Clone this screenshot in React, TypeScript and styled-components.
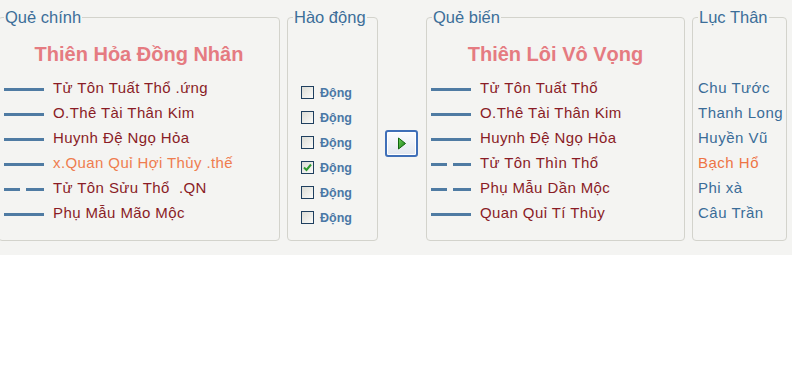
import React from 'react';
import styled, {createGlobalStyle} from 'styled-components';

const GlobalStyle = createGlobalStyle`
  html, body {
    margin: 0;
    padding: 0;
    background: #ffffff;
    font-family: Tahoma, "Liberation Sans", "DejaVu Sans", sans-serif;
  }
`

type Line = { kind: 'solid' | 'broken'; text: string; color?: 'orange' }

const chinh: Line[] = [
  {kind: 'solid', text: 'Tử Tôn Tuất Thổ .ứng'},
  {kind: 'solid', text: 'O.Thê Tài Thân Kim'},
  {kind: 'solid', text: 'Huynh Đệ Ngọ Hỏa'},
  {kind: 'solid', text: 'x.Quan Quỉ Hợi Thủy .thế', color: 'orange'},
  {kind: 'broken', text: 'Tử Tôn Sửu Thổ  .QN'},
  {kind: 'solid', text: 'Phụ Mẫu Mão Mộc'},
]

const bien: Line[] = [
  {kind: 'solid', text: 'Tử Tôn Tuất Thổ'},
  {kind: 'solid', text: 'O.Thê Tài Thân Kim'},
  {kind: 'solid', text: 'Huynh Đệ Ngọ Hỏa'},
  {kind: 'broken', text: 'Tử Tôn Thìn Thổ'},
  {kind: 'broken', text: 'Phụ Mẫu Dần Mộc'},
  {kind: 'solid', text: 'Quan Quỉ Tí Thủy'},
]

const hao = [false, false, false, true, false, false]
const lucThan = ['Chu Tước', 'Thanh Long', 'Huyền Vũ', 'Bạch Hổ', 'Phi xà', 'Câu Trần']

const Yao = ({kind}: { kind: Line['kind'] }) => (
  <YaoMark>
    {kind === 'solid' ? <Dash $w={40}/> : <><Dash $w={16}/><Dash $w={18}/></>}
  </YaoMark>
)

export default function App() {
  return (
    <>
      <GlobalStyle/>
      <Panel>
        <Group $w={282} $ml={-2}>
          <Legend>Quẻ chính</Legend>
          <Title>Thiên Hỏa Đồng Nhân</Title>
          <Rows $left={5}>
            {chinh.map((l, i) => (
              <Row key={i}>
                <Yao kind={l.kind}/>
                <HaoText $orange={l.color === 'orange'}>{l.text}</HaoText>
              </Row>
            ))}
          </Rows>
        </Group>

        <Group $w={91} $ml={7}>
          <Legend>Hào động</Legend>
          <Rows $left={13} $offset={3}>
            {hao.map((on, i) => (
              <Row key={i}>
                <Check>
                  {on && (
                    <svg width="9" height="9" viewBox="0 0 9 9">
                      <path d="M1 4.5 L3.5 7 L8 1.5" stroke="#2f9a2f" strokeWidth="2" fill="none"/>
                    </svg>
                  )}
                </Check>
                <CheckLabel>Động</CheckLabel>
              </Row>
            ))}
          </Rows>
        </Group>

        <ButtonCol>
          <PlayButton>
            <svg width="10" height="13" viewBox="0 0 10 13">
              <defs>
                <linearGradient id="pg" x1="0" y1="0" x2="1" y2="1">
                  <stop offset="0" stopColor="#6fd25c"/>
                  <stop offset="1" stopColor="#127a12"/>
                </linearGradient>
              </defs>
              <path d="M1.5 1 L8.5 6.5 L1.5 12 Z" fill="url(#pg)" stroke="#0f650f" strokeWidth="1"/>
            </svg>
          </PlayButton>
        </ButtonCol>

        <Group $w={259} $ml={8}>
          <Legend>Quẻ biến</Legend>
          <Title>Thiên Lôi Vô Vọng</Title>
          <Rows $left={4}>
            {bien.map((l, i) => (
              <Row key={i}>
                <Yao kind={l.kind}/>
                <HaoText>{l.text}</HaoText>
              </Row>
            ))}
          </Rows>
        </Group>

        <Group $w={95} $ml={7}>
          <Legend>Lục Thân</Legend>
          <Rows $left={5}>
            {lucThan.map((t, i) => (
              <Row key={i}>
                <ThanText $orange={t === 'Bạch Hổ'}>{t}</ThanText>
              </Row>
            ))}
          </Rows>
        </Group>
      </Panel>
    </>
  )
}

const Panel = styled.div`
  display: flex;
  align-items: flex-start;
  height: 255px;
  box-sizing: border-box;
  padding-top: 9px;
  background: #f4f4f2;
  overflow: hidden;
  color: #3a6c98;
`
const Group = styled.fieldset<{ $w: number; $ml: number }>`
  flex: none;
  box-sizing: border-box;
  width: ${p => p.$w}px;
  height: 232px;
  margin: 0 0 0 ${p => p.$ml}px;
  padding: 0;
  min-width: 0;
  border: 1px solid #d3d3cc;
  border-radius: 4px;
  display: flex;
  flex-direction: column;
`
const Legend = styled.legend`
  margin-left: 5px;
  padding: 0 1px;
  font-size: 16.5px;
  line-height: 16px;
  color: #3c6e99;
`
const Title = styled.div`
  height: 24px;
  margin-top: 17px;
  text-align: center;
  font-size: 20px;
  font-weight: bold;
  line-height: 24px;
  color: #e57b81;
`
const Rows = styled.div<{ $left: number; $offset?: number }>`
  display: flex;
  flex-direction: column;
  margin-top: auto;
  padding: 0 0 ${p => 13 - (p.$offset || 0)}px ${p => p.$left}px;
`
const Row = styled.div`
  display: flex;
  align-items: center;
  height: 25px;
  white-space: pre;
`
const YaoMark = styled.div`
  display: flex;
  justify-content: space-between;
  width: 40px;
  margin-right: 9px;
`
const Dash = styled.span<{ $w: number }>`
  display: block;
  width: ${p => p.$w}px;
  height: 3px;
  background: #4f7ba3;
`
const HaoText = styled.span<{ $orange?: boolean }>`
  font-size: 15px;
  letter-spacing: 0.4px;
  line-height: 18px;
  margin-top: -3px;
  color: ${p => p.$orange ? '#ef7d4f' : '#8a1c26'};
`
const ThanText = styled.span<{ $orange?: boolean }>`
  font-size: 15px;
  letter-spacing: 0.5px;
  line-height: 18px;
  margin-top: -3px;
  color: ${p => p.$orange ? '#ee7445' : '#3a6c98'};
`
const Check = styled.span`
  display: flex;
  align-items: center;
  justify-content: center;
  box-sizing: border-box;
  width: 13px;
  height: 13px;
  margin-right: 6px;
  border: 1px solid #1f3f5f;
  background: linear-gradient(135deg, #dcdcd6, #fbfbf9);
`
const CheckLabel = styled.span`
  font-size: 12.5px;
  font-weight: bold;
  color: #4a78a6;
`
const ButtonCol = styled.div`
  flex: none;
  padding-top: 121px;
  margin-left: 7px;
`
const PlayButton = styled.button`
  display: flex;
  align-items: center;
  justify-content: center;
  box-sizing: border-box;
  width: 33px;
  height: 27px;
  padding: 0;
  border: 2px solid #3f6fb8;
  border-radius: 3px;
  background: linear-gradient(#fbfcfe, #e2e7ef);
  box-shadow: inset 0 0 0 1px #ffffff;
  cursor: pointer;
`
